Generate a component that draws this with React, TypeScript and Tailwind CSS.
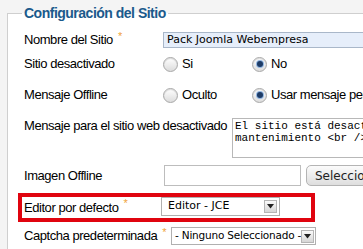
import React from "react";

const Star = () => (
  <span className="ml-[5px] text-[11px] text-[#f0a33c] relative -top-[4px]">*</span>
);

const Radio = ({ checked }: { checked?: boolean }) => (
  <span className="w-[15px] h-[15px] rounded-full border border-[#a8a8a8] bg-[linear-gradient(#ffffff,#dcdcdc)] shadow-[inset_0_1px_1px_rgba(0,0,0,0.15)] flex items-center justify-center shrink-0">
    {checked && <span className="w-[6px] h-[6px] rounded-full bg-[#1d3b66] ring-1 ring-[#8fb4e0]" />}
  </span>
);

const Arrow = () => (
  <span className="ml-auto mr-[2px] w-[13px] h-[13px] bg-[linear-gradient(#fafafa,#d6d6d6)] border border-[#b5b5b5] flex items-center justify-center shrink-0">
    <svg width="7" height="5" viewBox="0 0 7 5">
      <path d="M0 0 H7 L3.5 4.5 Z" fill="#222" />
    </svg>
  </span>
);

export default function App() {
  const lucida = "font-['DejaVu_Sans',sans-serif]";
  return (
    <div className="w-[363px] h-[249px] overflow-hidden bg-[#f4f4f4] font-['Liberation_Sans',Arial,sans-serif] text-[13px] tracking-[-0.45px] text-black">
      <fieldset className="mt-[4px] ml-[7px] w-[420px] h-[300px] border border-[#cfcfcf] bg-white pl-[16px]">
        <legend className="-ml-[2px] px-[2px] text-[14px] tracking-[-0.5px] leading-[18px] font-bold text-[#1b5a8c]">
          Configuración del Sitio
        </legend>

        <div className="flex items-center h-[16px] mt-[10px]">
          <div className="w-[139px] flex items-center">
            Nombre del Sitio <Star />
          </div>
          <div className={`flex-1 h-[16px] bg-[#e6eefa] border border-[#a9b7c9] pl-[3px] text-[11px] tracking-normal leading-[14px] ${lucida}`}>
            Pack Joomla Webempresa
          </div>
        </div>

        <div className="flex items-center h-[20px] mt-[6px]">
          <div className="w-[139px]">Sitio desactivado</div>
          <div className="w-[89px] flex items-center gap-[4px]">
            <Radio /> Si
          </div>
          <div className="flex items-center gap-[4px]">
            <Radio checked /> No
          </div>
        </div>

        <div className="flex items-center h-[20px] mt-[11px]">
          <div className="w-[139px]">Mensaje Offline</div>
          <div className="w-[89px] flex items-center gap-[4px]">
            <Radio /> Oculto
          </div>
          <div className="flex items-center gap-[4px] whitespace-nowrap">
            <Radio checked /> Usar mensaje personalizado
          </div>
        </div>

        <div className="flex items-start mt-[13px] h-[40px]">
          <div className="w-[208px] shrink-0 leading-[16px] whitespace-nowrap">
            Mensaje para el sitio web desactivado
          </div>
          <div className="w-[200px] h-[40px] border border-[#b8b8b8] pl-[2px] pt-[1px] font-['Liberation_Mono',monospace] text-[11px] tracking-normal leading-[12px] whitespace-pre">
            {"El sitio está desactivado por\nmantenimiento <br /> Por favor"}
          </div>
        </div>

        <div className="flex items-center h-[21px] mt-[7px]">
          <div className="w-[140px]">Imagen Offline</div>
          <div className="w-[137px] h-[21px] border border-[#bdbdbd] bg-white" />
          <div className={`ml-[5px] h-[21px] px-[8px] rounded-[5px] border border-[#b4b4b4] bg-[linear-gradient(#fbfbfb,#dedede)] flex items-center text-[12px] tracking-normal text-[#222] ${lucida}`}>
            Seleccionar
          </div>
        </div>

        <div className="flex items-center h-[29px] mt-[7px] -ml-[6px] w-[297px] border-4 border-[#e0040f] pl-[2px]">
          <div className="w-[137px] flex items-center">
            Editor por defecto <Star />
          </div>
          <div className={`w-[119px] h-[19px] self-start border border-[#b0b0b0] bg-white flex items-center pl-[6px] text-[11px] tracking-normal ${lucida}`}>
            Editor - JCE
            <Arrow />
          </div>
        </div>

        <div className="flex items-center h-[18px] mt-[5px]">
          <div className="w-[147px] flex items-center whitespace-nowrap">
            Captcha predeterminada <Star />
          </div>
          <div className={`w-[145px] h-[18px] border border-[#b0b0b0] bg-white flex items-center pl-[3px] text-[10.5px] tracking-[-0.2px] whitespace-nowrap ${lucida}`}>
            - Ninguno Seleccionado -
            <Arrow />
          </div>
        </div>
      </fieldset>
    </div>
  );
}
